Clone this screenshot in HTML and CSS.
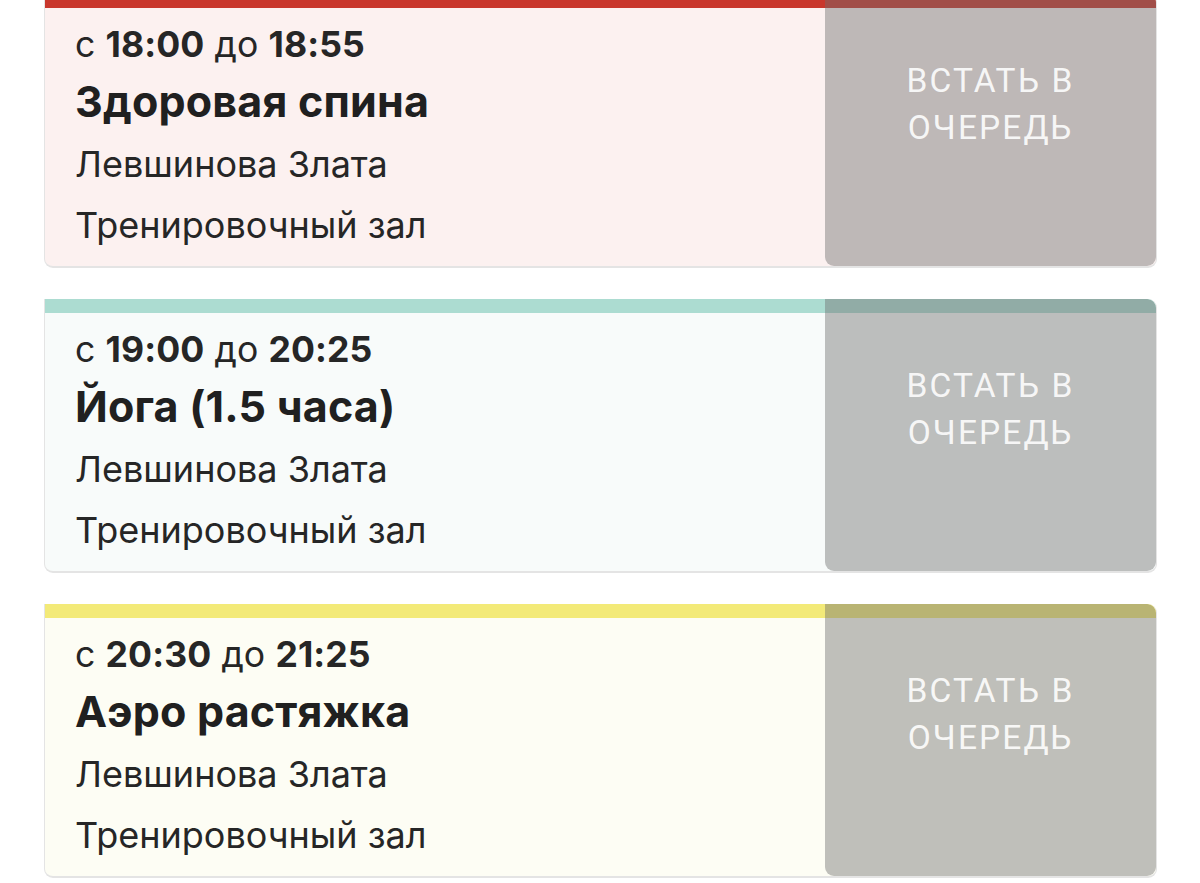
FILE: index.html
```html
<!DOCTYPE html>
<html lang="ru">
<head>
<meta charset="utf-8">
<title>Расписание</title>
<link rel="stylesheet" href="styles.css">
</head>
<body>
<div class="list">
  <div class="card card-red">
    <div class="info">
      <div class="time">с <b>18:00</b> до <b>18:55</b></div>
      <div class="title">Здоровая спина</div>
      <div class="line">Левшинова Злата</div>
      <div class="line">Тренировочный зал</div>
    </div>
    <div class="action">ВСТАТЬ В<br>ОЧЕРЕДЬ</div>
  </div>
  <div class="card card-teal">
    <div class="info">
      <div class="time">с <b>19:00</b> до <b>20:25</b></div>
      <div class="title">Йога (1.5 часа)</div>
      <div class="line">Левшинова Злата</div>
      <div class="line">Тренировочный зал</div>
    </div>
    <div class="action">ВСТАТЬ В<br>ОЧЕРЕДЬ</div>
  </div>
  <div class="card card-yellow">
    <div class="info">
      <div class="time">с <b>20:30</b> до <b>21:25</b></div>
      <div class="title">Аэро растяжка</div>
      <div class="line">Левшинова Злата</div>
      <div class="line">Тренировочный зал</div>
    </div>
    <div class="action">ВСТАТЬ В<br>ОЧЕРЕДЬ</div>
  </div>
</div>
</body>
</html>
```
FILE: styles.css
```css
html, body {
  margin: 0;
  padding: 0;
  background: #ffffff;
}
body {
  font-family: Inter, "Noto Sans", sans-serif;
  color: #262626;
  overflow: hidden;
}
.list {
  display: flex;
  flex-direction: column;
  gap: 31px;
  margin: -6px 43px 0 44px;
}
.card {
  display: flex;
  height: 274px;
  box-sizing: border-box;
  border: 1px solid #e4e4e4;
  border-top: none;
  border-bottom-width: 2px;
  border-radius: 0 9px 9px 9px;
  overflow: hidden;
}
.card-red { background: linear-gradient(#c9372c 0, #c9372c 14px, #fcf1f0 14px); }
.card-teal { background: linear-gradient(#acdcd1 0, #acdcd1 14px, #f8fbfa 14px); }
.card-yellow { background: linear-gradient(#f3ea78 0, #f3ea78 14px, #fdfdf4 14px); }
.info {
  flex: 1;
  padding: 28px 0 0 30px;
}
.time {
  font-size: 35.6px;
  line-height: 46px;
  height: 46px;
  letter-spacing: 0.1px;
}
.time b { font-weight: 700; }
.title {
  font-size: 43px;
  font-weight: 700;
  line-height: 66px;
  height: 66px;
  color: #202020;
  letter-spacing: 0.2px;
}
.line {
  font-size: 36px;
  line-height: 61px;
  height: 61px;
}
.action {
  width: 331px;
  flex: none;
  box-sizing: border-box;
  padding-top: 63px;
  background: rgba(110, 110, 110, 0.43);
  border-radius: 0 9px 9px 9px;
  font-family: Roboto, "Liberation Sans", sans-serif;
  font-size: 33.5px;
  line-height: 47px;
  letter-spacing: 2.1px;
  color: rgba(255, 255, 255, 0.9);
  text-align: center;
}
```
